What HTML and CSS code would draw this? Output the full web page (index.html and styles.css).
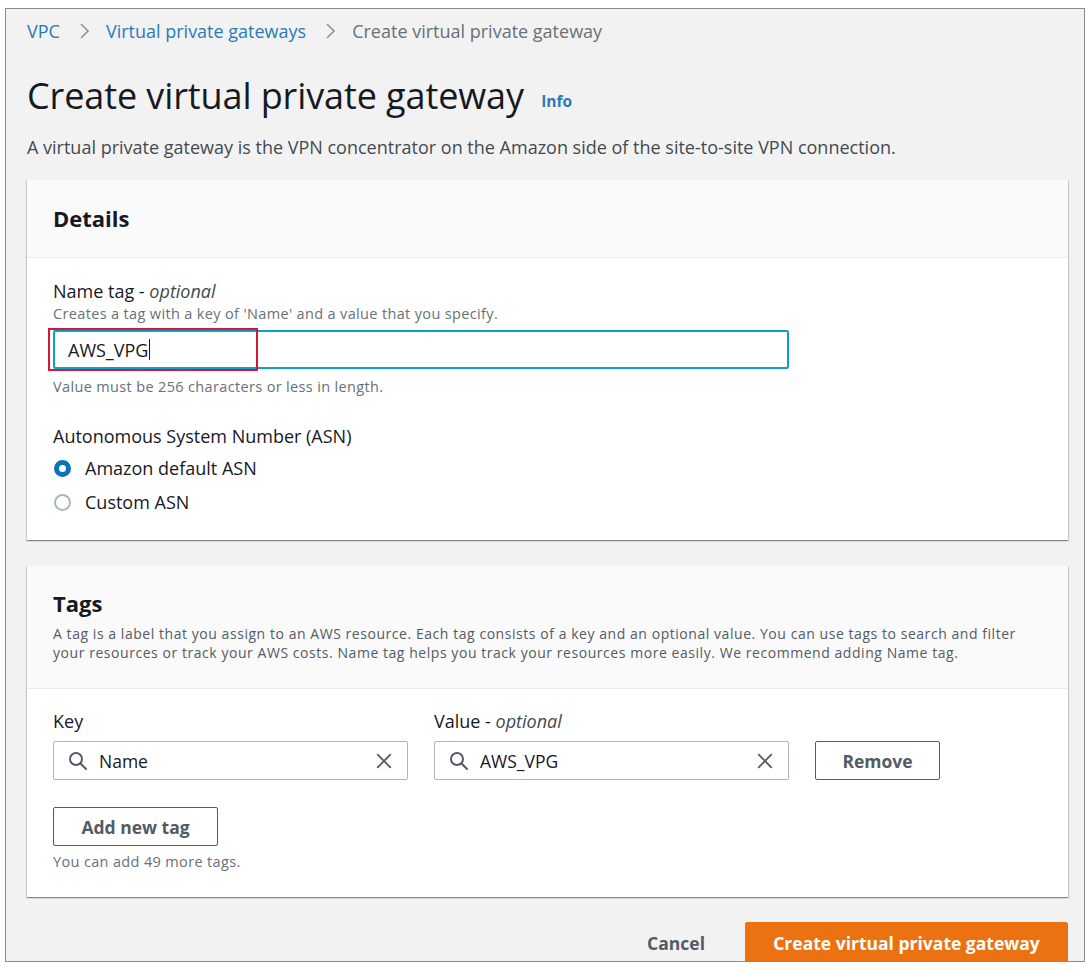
FILE: index.html
```html
<!DOCTYPE html>
<html>
<head>
<meta charset="utf-8">
<link rel="stylesheet" href="styles.css">
</head>
<body>
<div class="frame">
  <nav class="crumbs">
    <a class="crumb-link">VPC</a>
    <svg class="chev" viewBox="0 0 12 20" width="12" height="20"><path d="M3 3 L10 10 L3 17" fill="none" stroke="#8d9399" stroke-width="1.6"/></svg>
    <a class="crumb-link">Virtual private gateways</a>
    <svg class="chev" viewBox="0 0 12 20" width="12" height="20"><path d="M3 3 L10 10 L3 17" fill="none" stroke="#8d9399" stroke-width="1.6"/></svg>
    <span class="crumb-current">Create virtual private gateway</span>
  </nav>

  <h1 class="title">Create virtual private gateway <span class="info">Info</span></h1>
  <p class="lead">A virtual private gateway is the VPN concentrator on the Amazon side of the site-to-site VPN connection.</p>

  <section class="panel">
    <div class="panel-head">
      <h2 class="panel-title">Details</h2>
    </div>
    <div class="panel-body details-body">
      <div class="label">Name tag - <i>optional</i></div>
      <div class="hint hint-first">Creates a tag with a key of 'Name' and a value that you specify.</div>
      <div class="name-input">
        <span class="name-value">AWS_VPG</span><span class="caret"></span>
        <span class="highlight"></span>
      </div>
      <div class="hint hint-after">Value must be 256 characters or less in length.</div>

      <div class="label asn-label">Autonomous System Number (ASN)</div>
      <div class="radio-row"><span class="radio checked"></span><span class="radio-text">Amazon default ASN</span></div>
      <div class="radio-row"><span class="radio"></span><span class="radio-text">Custom ASN</span></div>
    </div>
  </section>

  <section class="panel tags-panel">
    <div class="panel-head tags-head">
      <h2 class="panel-title">Tags</h2>
      <p class="tags-desc">A tag is a label that you assign to an AWS resource. Each tag consists of a key and an optional value. You can use tags to search and filter your resources or track your AWS costs. Name tag helps you track your resources more easily. We recommend adding Name tag.</p>
    </div>
    <div class="panel-body tags-body">
      <div class="tag-row">
        <div class="tag-field">
          <div class="label">Key</div>
          <div class="search-input">
            <svg class="search-icon" viewBox="0 0 20 20" width="20" height="20"><circle cx="8" cy="8" r="6" fill="none" stroke="#545b64" stroke-width="2"/><path d="M12.5 12.5 L18 18" stroke="#545b64" stroke-width="2" stroke-linecap="round"/></svg>
            <span class="search-text">Name</span>
            <svg class="clear-icon" viewBox="0 0 20 20" width="20" height="20"><path d="M3 3 L17 17 M17 3 L3 17" stroke="#545b64" stroke-width="2" stroke-linecap="round"/></svg>
          </div>
        </div>
        <div class="tag-field">
          <div class="label">Value - <i>optional</i></div>
          <div class="search-input">
            <svg class="search-icon" viewBox="0 0 20 20" width="20" height="20"><circle cx="8" cy="8" r="6" fill="none" stroke="#545b64" stroke-width="2"/><path d="M12.5 12.5 L18 18" stroke="#545b64" stroke-width="2" stroke-linecap="round"/></svg>
            <span class="search-text">AWS_VPG</span>
            <svg class="clear-icon" viewBox="0 0 20 20" width="20" height="20"><path d="M3 3 L17 17 M17 3 L3 17" stroke="#545b64" stroke-width="2" stroke-linecap="round"/></svg>
          </div>
        </div>
        <button class="btn remove-btn">Remove</button>
      </div>
      <button class="btn add-btn">Add new tag</button>
      <div class="hint hint-count">You can add 49 more tags.</div>
    </div>
  </section>

  <div class="actions">
    <span class="cancel">Cancel</span>
    <button class="primary">Create virtual private gateway</button>
  </div>
</div>
</body>
</html>
```

FILE: styles.css
```css
* { box-sizing: border-box; }
html, body { margin: 0; padding: 0; background: #ffffff; }
body {
  font-family: "Open Sans", "Noto Sans", "Liberation Sans", sans-serif;
  color: #16191f;
}
.frame {
  margin: 8px 0 0 5px;
  width: 1080px;
  height: 954px;
  border: 1px solid #8c8c8c;
  background: #f2f2f2;
  overflow: hidden;
  padding: 10px 15px 0 21px;
}
.crumbs {
  display: flex;
  align-items: center;
  height: 24px;
  font-size: 18px;
  line-height: 24px;
}
.crumb-link { color: #2a7ab8; }
.chev { margin: 0 16px 0 18px; }
.crumb-current { color: #687078; }

.title {
  margin: 30px 0 0 0;
  font-size: 36px;
  line-height: 46px;
  font-weight: 400;
  color: #16191f;
  letter-spacing: -0.1px;
}
.info {
  font-size: 15.5px;
  font-weight: 700;
  color: #2a7ab8;
  margin-left: 8px;
  vertical-align: 2px;
  letter-spacing: 0;
}
.lead {
  margin: 12px 0 0 0;
  font-size: 18px;
  line-height: 22px;
  color: #444a50;
}

.panel {
  margin-top: 22px;
  width: 1041px;
  background: #ffffff;
  box-shadow: 0 1px 1px 0 rgba(0,28,36,0.3), 1px 1px 1px 0 rgba(0,28,36,0.15), -1px 1px 1px 0 rgba(0,28,36,0.15);
}
.panel-head {
  background: #fafafa;
  border-bottom: 1px solid #eaeded;
  padding: 24px 26px 0 26px;
  height: 78px;
}
.panel-title {
  margin: 0;
  font-size: 22px;
  line-height: 28px;
  font-weight: 700;
  color: #16191f;
}
.panel-body {
  padding: 22px 26px 0 26px;
}
.details-body { height: 282px; }
.label {
  font-size: 18px;
  line-height: 22px;
  color: #16191f;
}
.label i { color: #444a50; }
.hint {
  font-size: 14.5px;
  line-height: 18px;
  letter-spacing: 0.35px;
  color: #687078;
}
.hint-first { margin-top: 3px; }
.name-input {
  position: relative;
  margin-top: 7px;
  width: 736px;
  height: 39px;
  border: 2px solid #0aa0c8;
  border-radius: 2px;
  padding: 0 0 0 13px;
  display: flex;
  align-items: center;
  font-size: 18px;
  color: #16191f;
}
.caret {
  display: inline-block;
  width: 1px;
  height: 21px;
  background: #16191f;
  margin-left: 1px;
}
.highlight {
  position: absolute;
  left: -7px;
  top: -4px;
  width: 210px;
  height: 43px;
  border: 2px solid #d4163a;
}
.hint-after { margin-top: 9px; }
.asn-label { margin-top: 29px; }
.radio-row {
  display: flex;
  align-items: center;
  height: 34px;
}
.asn-label + .radio-row { margin-top: 4px; }
.radio {
  width: 17px;
  height: 17px;
  border-radius: 50%;
  border: 2px solid #aab7b8;
  background: #fff;
  margin-right: 14px;
  margin-left: 1px;
}
.radio.checked {
  border: 5px solid #0a73ba;
}
.radio-text {
  font-size: 18px;
  color: #16191f;
}

.tags-panel { margin-top: 26px; }
.tags-head {
  height: 123px;
  padding-top: 23px;
}
.tags-desc {
  margin: 7px 0 0 0;
  max-width: 980px;
  font-size: 14px;
  line-height: 19px;
  color: #545b64;
  letter-spacing: 0.55px;
}
.tags-body {
  padding-top: 21px;
  height: 208px;
}
.tag-row {
  display: flex;
  align-items: flex-end;
  gap: 26px;
}
.tag-field {
  width: 355px;
}
.search-input {
  margin-top: 9px;
  height: 39px;
  border: 1px solid #aab7b8;
  border-radius: 2px;
  display: flex;
  align-items: center;
  padding: 0 14px 0 14px;
  background: #fff;
}
.search-icon { margin-right: 11px; }
.search-text {
  flex: 1;
  font-size: 17.5px;
  color: #16191f;
}
.clear-icon { width: 18px; height: 18px; }
.btn {
  font-family: inherit;
  background: #fff;
  border: 1px solid #545b64;
  border-radius: 2px;
  color: #545b64;
  font-weight: 700;
  font-size: 17.5px;
  height: 39px;
  padding: 0;
}
.remove-btn { width: 125px; }
.add-btn {
  margin-top: 27px;
  width: 165px;
}
.hint-count { margin-top: 7px; }

.actions {
  margin-top: 25px;
  width: 1041px;
  display: flex;
  justify-content: flex-end;
  align-items: center;
}
.cancel {
  font-size: 17.5px;
  font-weight: 700;
  color: #545b64;
  margin-right: 40px;
}
.primary {
  font-family: inherit;
  background: #ec7211;
  border: 1px solid #ec7211;
  border-radius: 2px;
  color: #fff;
  font-weight: 700;
  font-size: 17.5px;
  height: 41px;
  width: 323px;
  padding: 0;
}
```
